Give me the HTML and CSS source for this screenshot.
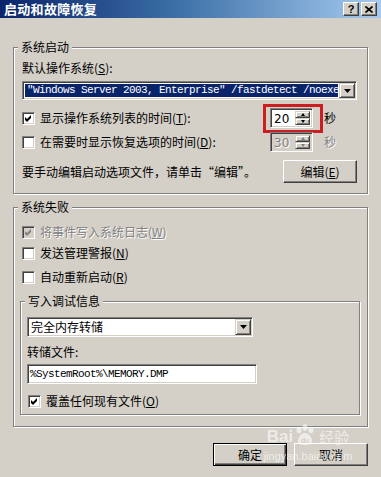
FILE: index.html
```html
<!DOCTYPE html>
<html lang="zh-CN">
<head>
<meta charset="utf-8">
<title>启动和故障恢复</title>
<link rel="stylesheet" href="styles.css">
</head>
<body>
<div class="window">
  <div class="titlebar">
    <span class="title">启动和故障恢复</span>
    <div class="tb-buttons">
      <span class="tb-btn help">?</span>
      <span class="tb-btn close"><svg width="8" height="7" viewBox="0 0 8 7"><path d="M0.5 0.5 L7.5 6.5 M7.5 0.5 L0.5 6.5" stroke="#000" stroke-width="1.7" fill="none"/></svg></span>
    </div>
  </div>

  <div class="group g1">
    <span class="legend">系统启动</span>
    <div class="row r-default">默认操作系统(<u>S</u>):</div>
    <div class="combo combo-os">
      <div class="combo-field sel mono">"Windows Server 2003, Enterprise" /fastdetect /noexecute=optout</div>
      <span class="drop"><svg width="7" height="4" viewBox="0 0 7 4"><polygon points="0,0 7,0 3.5,4" fill="#000"/></svg></span>
    </div>
    <div class="row r-spin1">
      <span class="opt"><span class="cb"><svg width="7" height="7" viewBox="0 0 7 7"><polygon points="0,2 2,4 6,0 6,3 2,7 0,5" fill="#000"/></svg></span>显示操作系统列表的时间(<u>T</u>):</span>
      <span class="spin hl"><span class="spin-val">20</span><span class="spin-btns"><span class="sb"><i class="arr up"></i></span><span class="sb"><i class="arr down"></i></span></span></span>
      <span class="unit">秒</span>
    </div>
    <div class="row r-spin2">
      <span class="opt"><span class="cb"></span>在需要时显示恢复选项的时间(<u>D</u>):</span>
      <span class="spin disabled"><span class="spin-val dis">30</span><span class="spin-btns"><span class="sb"><i class="arr up dis"></i></span><span class="sb"><i class="arr down dis"></i></span></span></span>
      <span class="unit dis">秒</span>
    </div>
    <div class="row r-edit">
      <span>要手动编辑启动选项文件，请单击“编辑”。</span>
      <span class="btn btn-edit">编辑(<u>E</u>)</span>
    </div>
  </div>

  <div class="group g2">
    <span class="legend">系统失败</span>
    <div class="row r-w">
      <span class="cb cb-dis"><svg width="7" height="7" viewBox="0 0 7 7"><polygon points="0,2 2,4 6,0 6,3 2,7 0,5" fill="#808080"/></svg></span><span class="dis">将事件写入系统日志(<u>W</u>)</span>
    </div>
    <div class="row r-n">
      <span class="cb"></span><span>发送管理警报(<u>N</u>)</span>
    </div>
    <div class="row r-r">
      <span class="cb"></span><span>自动重新启动(<u>R</u>)</span>
    </div>

    <div class="group g3">
      <span class="legend">写入调试信息</span>
      <div class="combo combo-dump">
        <div class="combo-field">完全内存转储</div>
        <span class="drop"><svg width="7" height="4" viewBox="0 0 7 4"><polygon points="0,0 7,0 3.5,4" fill="#000"/></svg></span>
      </div>
      <div class="row r-file">转储文件:</div>
      <div class="field mono">%SystemRoot%\MEMORY.DMP</div>
      <div class="row r-over">
        <span class="cb"><svg width="7" height="7" viewBox="0 0 7 7"><polygon points="0,2 2,4 6,0 6,3 2,7 0,5" fill="#000"/></svg></span><span>覆盖任何现有文件(<u>O</u>)</span>
      </div>
    </div>
  </div>

  <div class="actions">
    <span class="btn btn-default">确定</span>
    <span class="btn">取消</span>
  </div>

  <div class="watermark">
    <span class="wm-top"><b class="wm-bai">Bai</b><svg class="wm-paw" width="22" height="22" viewBox="0 0 22 22"><ellipse cx="5" cy="6" rx="2.5" ry="3.2" fill="#fff"/><ellipse cx="11" cy="3.5" rx="2.5" ry="3.2" fill="#fff"/><ellipse cx="17" cy="6" rx="2.5" ry="3.2" fill="#fff"/><path d="M11 9 C6 9 4 15 4 17 C4 20 7 21 11 21 C15 21 18 20 18 17 C18 15 16 9 11 9 Z" fill="#fff"/><text x="11" y="19" font-size="7" text-anchor="middle" fill="#b8b4ac" font-family="Liberation Sans">du</text></svg><span class="wm-jy">经验</span></span>
    <span class="wm-url">jingyan.baidu.com</span>
  </div>
</div>
</body>
</html>
```

FILE: styles.css
```css
* { box-sizing: border-box; }

body {
  margin: 0;
  background: #d4d0c8;
  font-family: "Noto Sans CJK SC", "Noto Sans", sans-serif;
  font-size: 12px;
  line-height: 14px;
  color: #000;
}

u { text-decoration: underline; text-underline-offset: 1px; }

.window {
  position: relative;
  width: 381px;
  height: 477px;
  background: #d4d0c8;
  overflow: hidden;
}

/* title bar */
.titlebar {
  height: 18px;
  display: flex;
  align-items: center;
  justify-content: space-between;
  padding: 0 4px 0 4px;
  background: linear-gradient(to right, #0a246a 0%, #3a6ea5 45%, #a6caf0 100%);
}
.title {
  color: #fff;
  font-weight: 700;
  font-size: 13px;
  line-height: 18px;
  letter-spacing: 0.3px;
}
.tb-buttons { display: flex; gap: 2px; }
.tb-btn {
  width: 16px;
  height: 14px;
  display: flex;
  align-items: center;
  justify-content: center;
  background: #d4d0c8;
  border: 1px solid;
  border-color: #fff #404040 #404040 #fff;
  box-shadow: inset -1px -1px #808080;
  font-family: "Liberation Sans", sans-serif;
  font-weight: 700;
  font-size: 11px;
  line-height: 12px;
}

/* group boxes */
.group {
  position: relative;
  border: 1px solid #808080;
  box-shadow: inset 1px 1px #fff, 1px 1px #fff;
}
.legend {
  position: absolute;
  top: -8px;
  left: 4px;
  padding: 0 3px;
  background: #d4d0c8;
  line-height: 14px;
}
.g1 {
  margin: 29px 0 0 13px;
  width: 355px;
  height: 147px;
  padding-left: 8px;
}
.g2 {
  margin: 13px 0 0 13px;
  width: 355px;
  height: 220px;
  padding-left: 8px;
}
.g3 {
  margin: 17px 0 0 -2px;
  width: 340px;
  height: 114px;
  padding-left: 6px;
}

.row {
  display: flex;
  align-items: center;
  height: 14px;
  white-space: nowrap;
}
.r-default { margin-top: 13px; }
.r-spin1 { margin-top: 8px; height: 20px; }
.r-spin2 { margin-top: 4px; height: 20px; }
.r-edit { margin-top: 8px; height: 23px; }
.r-w { margin-top: 17px; }
.r-n { margin-top: 7px; }
.r-r { margin-top: 10px; }
.r-file { margin-top: 8px; }
.r-over { margin-top: 10px; margin-left: 1px; }

.opt {
  display: flex;
  align-items: center;
  width: 248px;
}

/* checkbox */
.cb {
  flex: none;
  width: 13px;
  height: 13px;
  margin-right: 5px;
  display: inline-flex;
  align-items: center;
  justify-content: center;
  background: #fff;
  border: 1px solid;
  border-color: #808080 #fff #fff #808080;
  box-shadow: inset 1px 1px #404040, inset -1px -1px #d4d0c8;
}
.cb-dis { background: #d4d0c8; }

.dis {
  color: #808080;
  text-shadow: 1px 1px 0 #fff;
}

/* combo & fields */
.combo {
  display: flex;
  background: #fff;
  border: 1px solid;
  border-color: #808080 #fff #fff #808080;
  box-shadow: inset 1px 1px #404040, inset -1px -1px #d4d0c8;
  padding: 1px;
}
.combo-os {
  margin-top: 6px;
  width: 335px;
  height: 19px;
}
.combo-dump {
  margin-top: 15px;
  width: 226px;
  height: 20px;
}
.combo-field {
  flex: 1;
  min-width: 0;
  overflow: hidden;
  white-space: nowrap;
  padding-left: 2px;
  line-height: 15px;
}
.combo-os .combo-field { margin: 1px 1px 1px 1px; line-height: 13px; }
.sel { background: #0a246a; color: #fff; }
.mono {
  font-family: "Liberation Mono", "DejaVu Sans Mono", monospace;
  font-size: 11px;
  letter-spacing: -0.6px;
}
.drop {
  flex: none;
  width: 16px;
  display: flex;
  align-items: center;
  justify-content: center;
  background: #d4d0c8;
  border: 1px solid;
  border-color: #d4d0c8 #404040 #404040 #d4d0c8;
  box-shadow: inset 1px 1px #fff, inset -1px -1px #808080;
}

.field {
  margin-top: 5px;
  width: 230px;
  height: 20px;
  background: #fff;
  border: 1px solid;
  border-color: #808080 #fff #fff #808080;
  box-shadow: inset 1px 1px #404040, inset -1px -1px #d4d0c8;
  padding: 2px 0 0 2px;
  line-height: 15px;
  white-space: nowrap;
}

/* spin */
.spin {
  position: relative;
  flex: none;
  display: flex;
  width: 43px;
  height: 20px;
  background: #fff;
  border: 1px solid;
  border-color: #808080 #fff #fff #808080;
  box-shadow: inset 1px 1px #404040, inset -1px -1px #d4d0c8;
  padding: 2px 2px 2px 2px;
}
.spin.disabled { background: #d4d0c8; }
.spin-val {
  flex: 1;
  padding-left: 1px;
  line-height: 16px;
  font-family: "DejaVu Sans", sans-serif;
  font-size: 12px;
}
.spin-btns {
  flex: none;
  width: 15px;
  display: flex;
  flex-direction: column;
}
.sb {
  flex: 1;
  display: flex;
  align-items: center;
  justify-content: center;
  background: #d4d0c8;
  border: 1px solid;
  border-color: #d4d0c8 #404040 #404040 #d4d0c8;
  box-shadow: inset 1px 1px #fff, inset -1px -1px #808080;
}
.arr {
  width: 0;
  height: 0;
  border-left: 2.5px solid transparent;
  border-right: 2.5px solid transparent;
}
.arr.up { border-bottom: 3px solid #000; }
.arr.down { border-top: 3px solid #000; }
.arr.up.dis { border-bottom-color: #808080; }
.arr.down.dis { border-top-color: #808080; }

.hl::after {
  content: "";
  position: absolute;
  left: -8px;
  top: -5px;
  right: -11px;
  bottom: -6px;
  border: 3px solid #cc1e22;
}

.unit { margin-left: 11px; }

/* buttons */
.btn {
  flex: none;
  width: 74px;
  height: 23px;
  display: flex;
  align-items: center;
  justify-content: center;
  background: #d4d0c8;
  border: 1px solid;
  border-color: #fff #404040 #404040 #fff;
  box-shadow: inset -1px -1px #808080;
}
.btn-edit { margin-left: auto; margin-right: 10px; }
.btn-default {
  border-color: #000;
  box-shadow: inset 1px 1px #fff, inset -1px -1px #404040, inset -2px -2px #808080;
}

.actions {
  display: flex;
  justify-content: flex-end;
  gap: 7px;
  margin-top: 16px;
  padding-right: 13px;
}

/* watermark overlay */
.watermark {
  position: absolute;
  left: 258px;
  top: 424px;
  width: 100px;
  display: flex;
  flex-direction: column;
  align-items: center;
  opacity: 0.6;
  color: #fff;
  pointer-events: none;
}
.wm-top { display: flex; align-items: flex-end; gap: 1px; }
.wm-bai {
  font-family: "Liberation Sans", sans-serif;
  font-size: 17px;
  line-height: 18px;
}
.wm-jy { font-size: 15px; line-height: 18px; margin-left: 2px; }
.wm-url {
  font-family: "Liberation Sans", sans-serif;
  font-size: 11px;
  line-height: 12px;
  margin-top: 4px;
}
```
